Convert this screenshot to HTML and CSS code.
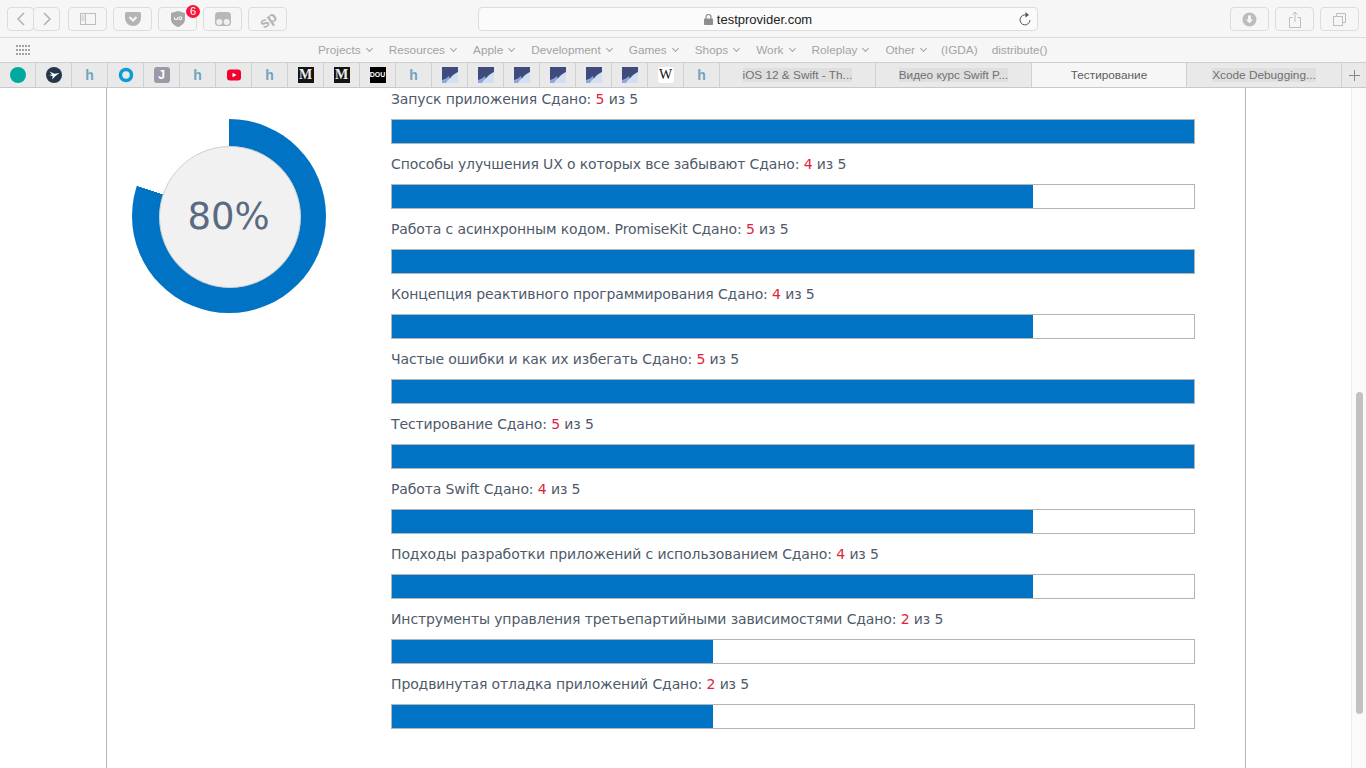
FILE: index.html
```html
<!DOCTYPE html>
<html>
<head>
<meta charset="utf-8">
<title>Тестирование</title>
<link rel="stylesheet" href="styles.css">
</head>
<body>
<div class="toolbar">
    <div class="nav-group">
        <div class="tool-btn nav-btn"><svg width="12" height="16" viewBox="0 0 12 16"><path d="M9 2 3 8l6 6" class="ico-line"/></svg></div>
        <div class="tool-btn nav-btn nav-next"><svg width="12" height="16" viewBox="0 0 12 16"><path d="m3 2 6 6-6 6" class="ico-line"/></svg></div>
    </div>
    <div class="tool-btn first-ext"><svg width="16" height="12" viewBox="0 0 16 12"><rect x=".5" y=".5" width="15" height="11" class="ico-thin"/><path d="M5.500 .5v11M1.500 3h3M1.500 5h3M1.500 7h3" class="ico-thin"/></svg></div>
    <div class="tool-btn"><svg width="16" height="14" viewBox="0 0 16 14"><path d="M1.500 0h13A1.500 1.500 0 0 1 16 1.500V6A8 8 0 0 1 0 6V1.500A1.500 1.500 0 0 1 1.500 0Z" fill="#b4b4b4"/><path d="m4.500 5 3.500 3.500L11.500 5" fill="none" stroke="#f6f6f6" stroke-width="2"/></svg></div>
    <div class="tool-btn">
        <svg width="14" height="16" viewBox="0 0 14 16"><path d="M7 0 14 2v6c0 4-3 6.500-7 8-4-1.500-7-4-7-8V2Z" fill="#a8a8a8"/><path d="M3.500 6v2.500h3V6M8 6v2.500h2.500V6Z" fill="none" stroke="#f6f6f6"/></svg>
        <span class="badge">6</span>
    </div>
    <div class="tool-btn"><svg width="16" height="14" viewBox="0 0 16 14"><rect width="16" height="14" rx="3.500" fill="#b8b8b8"/><circle cx="4.300" cy="10" r="3" fill="#f0f0f0"/><circle cx="11.700" cy="10" r="3" fill="#f0f0f0"/></svg></div>
    <div class="tool-btn"><span class="sp-mark">sp</span></div>

    <div class="address">
        <div class="address-title">
            <svg width="9" height="11" viewBox="0 0 9 11"><path d="M2 5V3a2.500 2.500 0 0 1 5 0v2" fill="none" stroke="#8e8e8e" stroke-width="1.200"/><rect y="4.500" width="9" height="6.500" rx=".8" fill="#8e8e8e"/></svg>
            <span>testprovider.com</span>
        </div>
        <svg class="reload" width="12" height="14" viewBox="0 0 12 14"><path d="M7.500 3.100A5 5 0 1 0 11 8" fill="none" stroke="#555" stroke-width="1"/><path d="M6.500 0 10 3 6.500 5.500Z" fill="#555"/></svg>
    </div>

    <div class="tool-btn first-right"><svg width="15" height="15" viewBox="0 0 15 15"><circle cx="7.500" cy="7.500" r="7" fill="#bcbcbc"/><path d="M6 3.500h3v4h2.200L7.500 11.500 3.800 7.500H6Z" fill="#f6f6f6"/></svg></div>
    <div class="tool-btn"><svg width="12" height="17" viewBox="0 0 12 17"><path d="M3.500 6.500H.5v10h11v-10h-3M6 11V1M3.500 3.500 6 1l2.500 2.500" class="ico-thin"/></svg></div>
    <div class="tool-btn"><svg width="13" height="13" viewBox="0 0 13 13"><path d="M3.500 3V.5h9v9H10" class="ico-thin"/><rect x=".5" y="3.500" width="9" height="9" class="ico-thin"/></svg></div>
</div>

<div class="bookmarks">
    <svg class="grid-icon" width="14" height="10" viewBox="0 0 14 10"><path d="M0 1h14M0 5h14M0 9h14" stroke="#a2a2a2" stroke-width="2" stroke-dasharray="2 1"/></svg>
    <div class="bookmark-list">
        <span class="bm">Projects<i class="chev"></i></span>
        <span class="bm">Resources<i class="chev"></i></span>
        <span class="bm">Apple<i class="chev"></i></span>
        <span class="bm">Development<i class="chev"></i></span>
        <span class="bm">Games<i class="chev"></i></span>
        <span class="bm">Shops<i class="chev"></i></span>
        <span class="bm">Work<i class="chev"></i></span>
        <span class="bm">Roleplay<i class="chev"></i></span>
        <span class="bm">Other<i class="chev"></i></span>
        <span class="bm bm-plain">(IGDA)</span>
        <span class="bm bm-last">distribute()</span>
    </div>
</div>

<div class="tabs">
    <div class="pin"><span class="fav-dot"></span></div>
    <div class="pin"><svg width="16" height="16" viewBox="0 0 16 16"><circle cx="8" cy="8" r="8" fill="#22384a"/><path d="M3.500 4.500 8.500 6.800 13.500 6 9.500 9 6 12.500 6.800 9.200 3 8 6.200 7.500Z" fill="#fff"/></svg></div>
    <div class="pin"><span class="fav-h">h</span></div>
    <div class="pin"><svg width="16" height="16" viewBox="0 0 16 16"><circle cx="8" cy="8" r="5.500" fill="none" stroke="#0d9bd5" stroke-width="3.500"/></svg></div>
    <div class="pin"><span class="fav-j">J</span></div>
    <div class="pin"><span class="fav-h">h</span></div>
    <div class="pin"><svg width="16" height="16" viewBox="0 0 16 16"><rect x="1" y="2.500" width="14" height="11" rx="3" fill="#f5002c"/><path d="M6.500 5.800 10.500 8l-4 2.200Z" fill="#fff"/></svg></div>
    <div class="pin"><span class="fav-h">h</span></div>
    <div class="pin"><span class="fav-m">M</span></div>
    <div class="pin"><span class="fav-m">M</span></div>
    <div class="pin"><span class="fav-dou">DOU</span></div>
    <div class="pin"><span class="fav-h">h</span></div>
    <div class="pin"><svg width="16" height="16" viewBox="0 0 16 16"><use href="#wave"/></svg></div>
    <div class="pin"><svg width="16" height="16" viewBox="0 0 16 16"><use href="#wave"/></svg></div>
    <div class="pin"><svg width="16" height="16" viewBox="0 0 16 16"><use href="#wave"/></svg></div>
    <div class="pin"><svg width="16" height="16" viewBox="0 0 16 16"><use href="#wave"/></svg></div>
    <div class="pin"><svg width="16" height="16" viewBox="0 0 16 16"><use href="#wave"/></svg></div>
    <div class="pin"><svg width="16" height="16" viewBox="0 0 16 16"><use href="#wave"/></svg></div>
    <div class="pin"><span class="fav-w">W</span></div>
    <div class="pin"><span class="fav-h">h</span></div>
    <div class="tab"><span class="tab-title faded">iOS 12 &amp; Swift - Th...</span></div>
    <div class="tab"><span class="tab-title faded">Видео курс Swift P...</span></div>
    <div class="tab tab-narrow active"><span class="tab-title">Тестирование</span></div>
    <div class="tab tab-narrow"><span class="tab-title faded">Xcode Debugging...</span></div>
    <div class="new-tab"><svg width="11" height="11" viewBox="0 0 11 11"><path d="M5.500 0v11M0 5.500h11" stroke="#8a8a8a"/></svg></div>
</div>

<svg class="defs" width="0" height="0">
    <defs>
        <g id="wave">
            <rect width="16" height="16" fill="#3f4b7c"/>
            <path d="M0 16V13C3 12 5 11 7 9L9 16Z" fill="#8ea6d8"/>
            <path d="M4 16C5 13 8 12 10 9 12 7 14 6 16 5V16Z" fill="#d3e0f4"/>
        </g>
    </defs>
</svg>

<div class="viewport">
    <div class="page">
        <div class="frame">
            <div class="score">
                <div class="ring">
                    <div class="ring-inner">80%</div>
                </div>
            </div>
            <div class="lessons">
                <div class="lesson">
                    <div class="lesson-name">Запуск приложения Сдано: <b>5</b> из 5</div>
                    <div class="bar"><div class="bar-fill" style="width: 100%"></div></div>
                </div>
                <div class="lesson">
                    <div class="lesson-name">Способы улучшения UX о которых все забывают Сдано: <b>4</b> из 5</div>
                    <div class="bar"><div class="bar-fill" style="width: 79.95%"></div></div>
                </div>
                <div class="lesson">
                    <div class="lesson-name">Работа с асинхронным кодом. PromiseKit Сдано: <b>5</b> из 5</div>
                    <div class="bar"><div class="bar-fill" style="width: 100%"></div></div>
                </div>
                <div class="lesson">
                    <div class="lesson-name">Концепция реактивного программирования Сдано: <b>4</b> из 5</div>
                    <div class="bar"><div class="bar-fill" style="width: 79.95%"></div></div>
                </div>
                <div class="lesson">
                    <div class="lesson-name">Частые ошибки и как их избегать Сдано: <b>5</b> из 5</div>
                    <div class="bar"><div class="bar-fill" style="width: 100%"></div></div>
                </div>
                <div class="lesson">
                    <div class="lesson-name">Тестирование Сдано: <b>5</b> из 5</div>
                    <div class="bar"><div class="bar-fill" style="width: 100%"></div></div>
                </div>
                <div class="lesson">
                    <div class="lesson-name">Работа Swift Сдано: <b>4</b> из 5</div>
                    <div class="bar"><div class="bar-fill" style="width: 79.95%"></div></div>
                </div>
                <div class="lesson">
                    <div class="lesson-name">Подходы разработки приложений с использованием Сдано: <b>4</b> из 5</div>
                    <div class="bar"><div class="bar-fill" style="width: 79.95%"></div></div>
                </div>
                <div class="lesson">
                    <div class="lesson-name">Инструменты управления третьепартийными зависимостями Сдано: <b>2</b> из 5</div>
                    <div class="bar"><div class="bar-fill" style="width: 40%"></div></div>
                </div>
                <div class="lesson">
                    <div class="lesson-name">Продвинутая отладка приложений Сдано: <b>2</b> из 5</div>
                    <div class="bar"><div class="bar-fill" style="width: 40%"></div></div>
                </div>
            </div>
        </div>
    </div>
    <div class="scrollbar"><div class="thumb"></div></div>
</div>
</body>
</html>
```

FILE: styles.css
```css
html, body {
    margin: 0;
    height: 100%;
    overflow: hidden;
}

body {
    font-family: "DejaVu Sans", sans-serif;
    background-color: #fff;
    display: flex;
    flex-direction: column;
}

/* browser toolbar */
.toolbar {
    height: 38px;
    flex: none;
    display: flex;
    align-items: flex-start;
    padding: 7px 0 0 7px;
    box-sizing: border-box;
    background-color: #f6f6f6;
    border-bottom: 1px solid #dcdcdc;
    font-family: "Liberation Sans", Arial, sans-serif;
}

.tool-btn {
    position: relative;
    width: 39px;
    height: 24px;
    box-sizing: border-box;
    border: 1px solid #dcdcdc;
    border-radius: 4px;
    display: flex;
    align-items: center;
    justify-content: center;
    margin-left: 6px;
}

.nav-group {
    display: flex;
}

.nav-btn {
    width: 27px;
    margin-left: 0;
}

.nav-next {
    margin-left: -1px;
}

.first-ext {
    margin-left: 8px;
}

.first-right {
    margin-left: 192px;
}

.ico-line {
    fill: none;
    stroke: #b0b0b0;
    stroke-width: 1.5;
}

.ico-thin {
    fill: none;
    stroke: #bdbdbd;
    stroke-width: 1;
}

.badge {
    position: absolute;
    top: -3px;
    right: -4px;
    width: 14px;
    height: 13px;
    border-radius: 50%;
    background-color: #f5163b;
    color: #fff;
    font-size: 11px;
    line-height: 13px;
    text-align: center;
}

.sp-mark {
    font-size: 15px;
    font-weight: bold;
    color: #b4b4b4;
    transform: rotate(-35deg);
}

.address {
    margin-left: 191px;
    width: 560px;
    height: 24px;
    box-sizing: border-box;
    border: 1px solid #dcdcdc;
    border-radius: 4px;
    background-color: #fbfbfb;
    display: flex;
    align-items: center;
    justify-content: center;
    position: relative;
}

.address-title {
    display: flex;
    align-items: center;
    gap: 4px;
    font-size: 13px;
    color: #222;
}

.reload {
    position: absolute;
    right: 6px;
    top: 4px;
}

/* favourites row */
.bookmarks {
    height: 24px;
    flex: none;
    display: flex;
    align-items: center;
    background-color: #f6f6f6;
    font-family: "Liberation Sans", Arial, sans-serif;
    font-size: 11.8px;
    color: #a3a3a3;
}

.grid-icon {
    margin-left: 16px;
}

.bookmark-list {
    display: flex;
    margin-left: 288px;
    gap: 17px;
}

.bm {
    display: flex;
    align-items: center;
    white-space: nowrap;
}

.bm-plain {
    margin-left: -2px;
}

.bm-last {
    margin-left: -3px;
}

.chev {
    width: 4px;
    height: 4px;
    margin: -3px 0 0 6px;
    border-right: 1px solid #a3a3a3;
    border-bottom: 1px solid #a3a3a3;
    transform: rotate(45deg);
}

/* tab bar */
.tabs {
    height: 26px;
    flex: none;
    box-sizing: border-box;
    display: flex;
    background-color: #e9e9e9;
    border-top: 1px solid #cfcfcf;
    border-bottom: 1px solid #c9c9c9;
    font-family: "Liberation Sans", Arial, sans-serif;
}

.pin {
    width: 36px;
    flex: none;
    box-sizing: border-box;
    border-right: 1px solid #d0d0d0;
    display: flex;
    align-items: center;
    justify-content: center;
}

.tab {
    width: 156px;
    flex: none;
    box-sizing: border-box;
    border-right: 1px solid #d0d0d0;
    display: flex;
    align-items: center;
    justify-content: center;
    font-size: 11.8px;
    color: #5e5e5e;
}

.tab-narrow {
    width: 155px;
}

.tab.active {
    background-color: #f6f6f6;
}

.faded {
    background-color: #dfdfdf;
    color: #707070;
}

.new-tab {
    flex: 1;
    display: flex;
    align-items: center;
    justify-content: center;
}

.fav-dot {
    width: 16px;
    height: 16px;
    border-radius: 50%;
    background-color: #00a99d;
}

.fav-h {
    font-size: 14px;
    font-weight: bold;
    color: #70a4bc;
}

.fav-j {
    width: 16px;
    height: 16px;
    border-radius: 3px;
    background-color: #9a9aa6;
    color: #fff;
    font-size: 12px;
    font-weight: bold;
    line-height: 16px;
    text-align: center;
}

.fav-m {
    width: 16px;
    height: 16px;
    background-color: #141414;
    color: #eee;
    font-family: "Liberation Serif", serif;
    font-size: 14px;
    font-weight: bold;
    line-height: 16px;
    text-align: center;
}

.fav-dou {
    width: 16px;
    height: 16px;
    background-color: #000;
    color: #fff;
    font-size: 7px;
    font-weight: bold;
    line-height: 16px;
    text-align: center;
}

.fav-w {
    width: 16px;
    height: 16px;
    border-radius: 3px;
    background-color: #fff;
    color: #111;
    font-family: "Liberation Serif", serif;
    font-size: 14px;
    line-height: 16px;
    text-align: center;
}

.defs {
    position: absolute;
}

/* page */
.viewport {
    flex: 1;
    min-height: 0;
    display: flex;
    overflow: hidden;
}

.page {
    flex: 1;
    min-width: 0;
}

.frame {
    width: 1140px;
    height: 100%;
    margin-left: 106px;
    box-sizing: border-box;
    border-left: 1px solid #b4b4b4;
    border-right: 1px solid #b4b4b4;
    display: flex;
}

.score {
    width: 284px;
    flex: none;
    padding: 31px 0 0 25px;
    box-sizing: border-box;
}

.ring {
    width: 194px;
    height: 194px;
    box-sizing: border-box;
    padding: 2px 0 0 2px;
    border-radius: 50%;
    background: conic-gradient(#0073c4 0 80%, #fff 80.05% 100%);
    display: flex;
    align-items: center;
    justify-content: center;
}

.ring-inner {
    width: 142px;
    height: 142px;
    box-sizing: border-box;
    padding-right: 3px;
    border: 1px solid #cfcfcf;
    border-radius: 50%;
    background-color: #f1f1f1;
    color: #5a6a80;
    font-size: 37px;
    line-height: 140px;
    text-align: center;
}

.lessons {
    width: 804px;
    flex: none;
}

.lesson {
    height: 65px;
}

.lesson-name {
    height: 31px;
    line-height: 22px;
    font-size: 14px;
    letter-spacing: -0.12px;
    color: #4f5a69;
    white-space: nowrap;
}

.lesson-name b {
    font-weight: normal;
    color: #e0233d;
}

.bar {
    height: 25px;
    box-sizing: border-box;
    border: 1px solid #b4b4b4;
    background-color: #fff;
}

.bar-fill {
    height: 100%;
    background-color: #0073c4;
}

/* scrollbar */
.scrollbar {
    width: 15px;
    flex: none;
    box-sizing: border-box;
    padding: 304px 3px 0 4px;
    background-color: #fafafa;
    border-left: 1px solid #ececec;
}

.thumb {
    height: 322px;
    border-radius: 4px;
    background-color: #c1c1c1;
}
```
